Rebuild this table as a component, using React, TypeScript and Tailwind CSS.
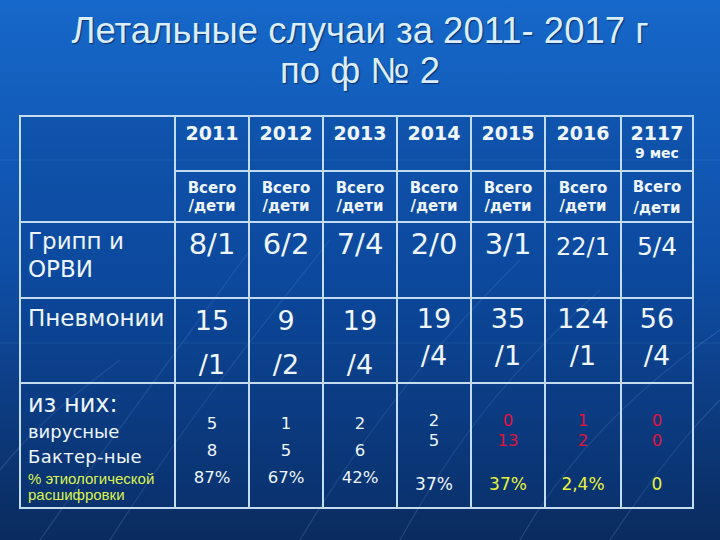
const years = ['2011', '2012', '2013', '2014', '2015', '2016']

const flu = [
  { v: '8/1', cls: 'text-[29px] pt-[3px]' },
  { v: '6/2', cls: 'text-[29px] pt-[3px]' },
  { v: '7/4', cls: 'text-[29px] pt-[3px]' },
  { v: '2/0', cls: 'text-[29px] pt-[3px]' },
  { v: '3/1', cls: 'text-[29px] pt-[3px]' },
  { v: '22/1', cls: 'text-[24px] pt-[6px]' },
  { v: '5/4', cls: 'text-[25px] pt-[6px]' },
]

const pneumo = [
  ['15', '/1'],
  ['9', '/2'],
  ['19', '/4'],
  ['19', '/4'],
  ['35', '/1'],
  ['124', '/1'],
  ['56', '/4'],
]

const ofThem = [
  ['5', '8', '87%'],
  ['1', '5', '67%'],
  ['2', '6', '42%'],
]

const ofThemLate = [
  { a: '2', b: '5', pct: '37%', num: 'text-[#eef6fc]', pc: 'text-[#eef6fc]' },
  { a: '0', b: '13', pct: '37%', num: 'text-[#e0143a]', pc: 'text-[#e8f23e]' },
  { a: '1', b: '2', pct: '2,4%', num: 'text-[#e0143a]', pc: 'text-[#e8f23e]' },
  { a: '0', b: '0', pct: '0', num: 'text-[#e0143a]', pc: 'text-[#e8f23e]' },
]

const cell = 'border-r-2 border-b-2 border-[#c4dcf0]'

export default function App() {
  return (
    <div className="relative h-[540px] w-[720px] overflow-hidden bg-gradient-to-b from-[#1668ca] via-[#0e4ea6] to-[#0a2b5e]">
      {/* background streaks */}
      <svg className="pointer-events-none absolute inset-0" width="720" height="540" viewBox="0 0 720 540">
        <g fill="none" stroke="#8ec4ff" strokeOpacity="0.18" strokeWidth="1.2">
          <path d="M40 540 C 110 440, 170 360, 250 250" />
          <path d="M110 540 C 180 430, 250 340, 330 240" />
          <path d="M300 540 C 360 440, 420 360, 520 260" />
          <path d="M400 540 C 450 450, 500 380, 600 290" />
          <path d="M520 540 C 560 470, 620 400, 720 330" />
          <path d="M610 540 C 650 480, 690 430, 720 400" />
          <path d="M0 470 C 40 420, 80 390, 120 360" />
        </g>
        <g stroke="#8ec4ff" strokeOpacity="0.12" strokeWidth="1">
          <line x1="0" y1="160" x2="720" y2="160" />
          <line x1="0" y1="343" x2="720" y2="343" />
        </g>
      </svg>

      <div className="relative flex flex-col items-center pt-[11px] font-['Liberation_Sans',Arial,sans-serif] text-[36.5px] leading-[40px] text-[#d9eefa] [text-shadow:1px_1px_1px_rgba(0,10,50,0.6)]">
        <div>Летальные случаи за 2011- 2017 г</div>
        <div>по ф № 2</div>
      </div>

      <div className="relative ml-[19px] mt-[24px] grid w-[675px] grid-cols-[155px_74px_74px_74px_74px_74px_76px_72px] grid-rows-[55px_51px_76px_85px_125px] border-l-2 border-t-2 border-[#c4dcf0] bg-[#083a88]/25 font-['DejaVu_Sans',Verdana,sans-serif] text-[#eef6fc]">
        {/* header */}
        <div className={`${cell} row-span-2`} />
        {years.map((y) => (
          <div key={y} className={`${cell} flex justify-center pt-[5px] text-[19px] font-bold leading-[22px]`}>
            {y}
          </div>
        ))}
        <div className={`${cell} flex flex-col items-center pt-[5px] font-bold`}>
          <span className="text-[19px] leading-[22px]">2117</span>
          <span className="text-[14px] leading-[18px]">9 мес</span>
        </div>

        {/* sub header */}
        {[...years, '2117'].map((y, i) => (
          <div
            key={'s' + y}
            className={`${cell} flex flex-col items-center justify-center text-[15px] font-bold ${i === 6 ? 'pt-[3px] leading-[21px]' : 'leading-[18px]'}`}
          >
            <span>Всего</span>
            <span>/дети</span>
          </div>
        ))}

        {/* flu */}
        <div className={`${cell} pl-[7px] pt-[4px] text-[23px] leading-[28px]`}>
          Грипп и
          <br />
          ОРВИ
        </div>
        {flu.map((f) => (
          <div key={'f' + f.v} className={`${cell} flex justify-center leading-[36px] ${f.cls}`}>
            {f.v}
          </div>
        ))}

        {/* pneumonia */}
        <div className={`${cell} pl-[7px] pt-[5px] text-[23px] leading-[28px]`}>Пневмонии</div>
        {pneumo.map(([a, b], i) => (
          <div
            key={'p' + i}
            className={`${cell} flex flex-col items-center text-[27px] ${i < 3 ? 'leading-[44px]' : 'pt-[1px] leading-[37px]'}`}
          >
            <span>{a}</span>
            <span>{b}</span>
          </div>
        ))}

        {/* of them */}
        <div className={`${cell} flex flex-col pl-[7px] pt-[5px]`}>
          <span className="text-[24px] leading-[30px]">из них:</span>
          <span className="text-[18px] leading-[25px]">вирусные</span>
          <span className="text-[18px] leading-[25px] tracking-[0.3px]">Бактер-ные</span>
          <span className="mt-[2px] font-['Liberation_Sans',Arial,sans-serif] text-[15px] leading-[16px] text-[#dcf24e]">
            % этиологической
          </span>
          <span className="font-['Liberation_Sans',Arial,sans-serif] text-[15px] leading-[16px] text-[#dcf24e]">
            расшифровки
          </span>
        </div>
        {ofThem.map((vals, i) => (
          <div key={'o' + i} className={`${cell} flex flex-col items-center pt-[26px] text-[16.5px] leading-[27px]`}>
            {vals.map((v, j) => (
              <span key={j}>{v}</span>
            ))}
          </div>
        ))}
        {ofThemLate.map((o, i) => (
          <div key={'l' + i} className={`${cell} flex flex-col items-center pt-[27px] text-[16.5px] leading-[20px]`}>
            <span className={o.num}>{o.a}</span>
            <span className={o.num}>{o.b}</span>
            <span className={`mt-[23px] text-[17px] ${o.pc}`}>{o.pct}</span>
          </div>
        ))}
      </div>
    </div>
  )
}
